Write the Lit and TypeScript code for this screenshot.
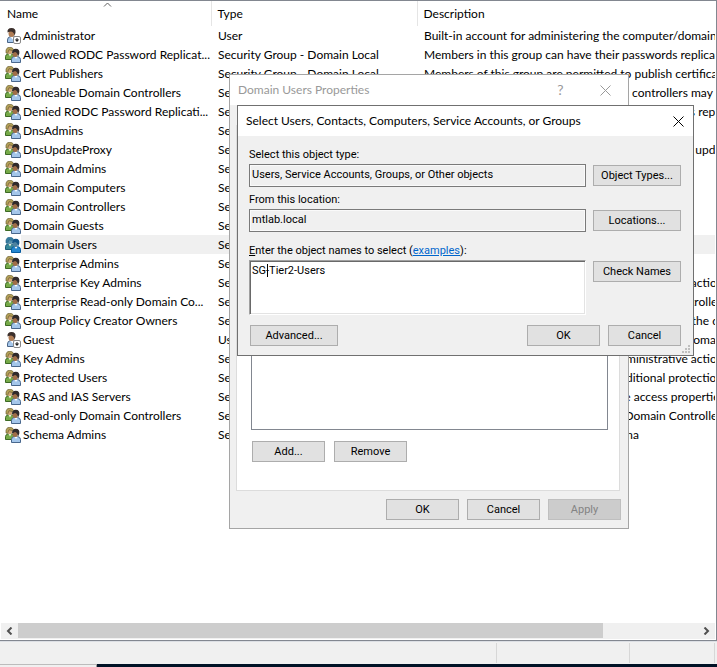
import { LitElement, html, css, svg } from "lit";
import { customElement, property } from "lit/decorators.js";

type Kind = "user" | "group";
interface Entry { name: string; kind: Kind; description: string; selected?: boolean }

const GROUP_TYPE = "Security Group - Domain Local";
const g = (name: string, description: string, selected = false): Entry => ({ name, kind: "group", description, selected });
const u = (name: string, description: string): Entry => ({ name, kind: "user", description });

const ENTRIES: Entry[] = [
  u("Administrator", "Built-in account for administering the computer/domain"),
  g("Allowed RODC Password Replicat...", "Members in this group can have their passwords replicated to all read-only domain controllers in the domain"),
  g("Cert Publishers", "Members of this group are permitted to publish certificates to the directory"),
  g("Cloneable Domain Controllers", "Members of this group that are domain controllers may be cloned."),
  g("Denied RODC Password Replicati...", "Members in this group cannot have their passwords replicated to any read-only domain controllers in the domain"),
  g("DnsAdmins", "DNS Administrators Group"),
  g("DnsUpdateProxy", "DNS clients who are permitted to perform dynamic updates on behalf of some other clients"),
  g("Domain Admins", "Designated administrators of the domain"),
  g("Domain Computers", "All workstations and servers"),
  g("Domain Controllers", "All domain controllers in the domain"),
  g("Domain Guests", "All domain guests"),
  g("Domain Users", "All domain users", true),
  g("Enterprise Admins", "Designated administrators of the enterprise"),
  g("Enterprise Key Admins", "Members of this group can perform administrative actions on key objects within the forest."),
  g("Enterprise Read-only Domain Co...", "Members of this group are Read-Only Domain Controllers in the enterprise"),
  g("Group Policy Creator Owners", "Members in this group can modify group policy for the domain"),
  u("Guest", "Built-in account for guest access to the computer/domain"),
  g("Key Admins", "Members of this group can perform administrative actions on key objects within the domain."),
  g("Protected Users", "Members of this group are afforded additional protections against authentication security threats."),
  g("RAS and IAS Servers", "Servers in this group can access remote access properties of users"),
  g("Read-only Domain Controllers", "Members of this group are Read-Only Domain Controllers in the domain"),
  g("Schema Admins", "Designated administrators of the schema"),
];

const userIcon = svg`
  <path d="M2.500 14.500V12Q2.500 9 5.500 8.500H9Q12 9 12 12V14.500Z" fill="#a6c8ec" stroke="#4a6587"/>
  <path d="M5.500 8.500L7.500 11.500L9.500 8.500Z" fill="#fff"/>
  <ellipse cx="6.500" cy="5.500" rx="3" ry="3.500" fill="#b07d55"/>
  <path d="M2.500 4.500Q2 0 6.500 0Q11 0 10.500 4.500L9.500 8Q9.300 4 6 3.500L3.500 4Z" fill="#3c302c"/>
  <rect x="8.500" y="8.500" width="7" height="7" rx="1.500" fill="#fff" stroke="#888"/>
  <path d="M11.500 10H12.500V11.500H14.300L12 14L9.700 11.500H11.500Z" fill="#222"/>`;

const groupIcon = (selected: boolean) => svg`
  <path d="M.5 12.500V9.500Q.5 7.500 3 7H7Q9.500 7.500 9.500 10V12.500Z" fill=${selected ? "#368898" : "#76aa48"} stroke=${selected ? "#1b5d7a" : "#3d6a25"}/>
  <path d="M3.500 7L5 9.500L6.500 7Z" fill="#e9f1dc"/>
  <ellipse cx="4.800" cy="4.300" rx="2.400" ry="2.800" fill=${selected ? "#5791ac" : "#d0a673"}/>
  <path d="M1 6Q.3 .3 4.800 .3Q9 .3 8.500 4.500L7.300 3.500L4 2.700L2.500 6.500Z" fill=${selected ? "#397d9d" : "#b4a058"} stroke=${selected ? "#20658d" : "#5e542a"} stroke-width=".6"/>
  <path d="M6.500 15.500V12.500Q6.500 10 9 9.500H12.500Q15.500 10 15.500 12.500V15.500Z" fill=${selected ? "#2587cf" : "#a4c6ea"} stroke=${selected ? "#075b9f" : "#48678d"}/>
  <path d="M9.500 9.500L11 12L12.500 9.500Z" fill="#fff"/>
  <ellipse cx="10.200" cy="7" rx="2.700" ry="3" fill=${selected ? "#4d829f" : "#a06e48"}/>
  <path d="M7 6.500Q6.800 1.800 10.800 1.800Q15 1.800 14.300 6.500L13 9.800Q12.800 5.500 10 5Z" fill=${selected ? "#125588" : "#302a2b"}/>`;

const fonts = css`
  * { box-sizing: border-box; }
  button, input, textarea { font: inherit; color: inherit; margin: 0; }
  .btn {
    height: 21px; padding: 0; border: 1px solid #adadad; border-radius: 0;
    background: #e1e1e1; color: #000; text-align: center; width: 73px;
    font: 11px/19px Roboto, sans-serif;
  }
  .btn.wide { width: 88px; }
  .btn:disabled { background: #ccc; border-color: #bfbfbf; color: #838383; }
  .bar {
    display: flex; align-items: center; background: #fff; height: 30px;
    padding-left: 8px; font: 12px/16px Lato, sans-serif;
  }
  .bar h2 { flex: 1; margin: 0; font: inherit; white-space: nowrap; }
  .cap { border: 0; background: none; padding: 0; width: 30px; height: 28px; display: grid; place-items: center; }
`;

const cross = html`<svg width="11" height="11" viewBox="0 0 11 11" fill="none" stroke="currentColor"><path d="M.5 .5L10.500 10.500M10.500 .5L.5 10.500"/></svg>`;

@customElement("directory-list")
class DirectoryList extends LitElement {
  @property({ attribute: false }) entries: Entry[] = [];

  static styles = css`
    * { box-sizing: border-box; }
    :host {
      display: flex; flex-direction: column; overflow: hidden; background: #fff;
      border: 1px solid #828790; border-left: 0; padding-right: 1px;
      font: 12px/19px Lato, sans-serif; color: #000;
    }
    .view { flex: 1; overflow: hidden; }
    table { width: 100%; table-layout: fixed; border-collapse: collapse; }
    .c1 { width: 211px; }
    .c2 { width: 206px; }
    th { height: 25px; padding: 0 0 0 7px; text-align: left; font-weight: 400; position: relative; }
    th + th { border-left: 1px solid #e5e5e5; padding-left: 6px; }
    .sort { position: absolute; left: 49%; top: 1px; }
    td { height: 19px; padding: 0 0 0 7px; white-space: nowrap; overflow: hidden; }
    .name { padding-left: 5px; }
    .item { display: flex; align-items: center; height: 19px; }
    .item svg { flex: none; }
    .label { flex: 1; padding-left: 2px; }
    .sel .label, .sel .plain { background: #f0f0f0; }
    .scroll { display: flex; height: 16px; margin: 0 0 1px 1px; background: #f0f0f0; color: #505050; }
    .scroll button { width: 17px; height: 16px; border: 0; padding: 0; background: none; color: inherit; display: grid; place-items: center; }
    .track { flex: 1; }
    .thumb { width: 86%; height: 15px; background: #cdcdcd; }
  `;

  render() {
    return html`
      <div class="view">
        <table>
          <colgroup><col class="c1"><col class="c2"><col></colgroup>
          <thead><tr>
            <th>Name<svg class="sort" width="9" height="5" viewBox="0 0 9 5" fill="none" stroke="#606060"><path d="M1 4.500L4.500 1L8 4.500"/></svg></th>
            <th>Type</th><th>Description</th>
          </tr></thead>
          <tbody>
            ${this.entries.map(e => html`
              <tr class=${e.selected ? "sel" : ""}>
                <td class="name"><div class="item">
                  <svg width="16" height="16" viewBox="0 0 16 16">${e.kind === "user" ? userIcon : groupIcon(!!e.selected)}</svg>
                  <span class="label">${e.name}</span>
                </div></td>
                <td class="plain">${e.kind === "user" ? "User" : GROUP_TYPE}</td>
                <td class="plain">${e.description}</td>
              </tr>`)}
          </tbody>
        </table>
      </div>
      <div class="scroll">
        <button aria-label="Scroll left"><svg width="7" height="8" viewBox="0 0 7 8" fill="none" stroke="currentColor" stroke-width="2"><path d="M5.500 .5L2 4L5.500 7.500"/></svg></button>
        <div class="track"><div class="thumb"></div></div>
        <button aria-label="Scroll right"><svg width="7" height="8" viewBox="0 0 7 8" fill="none" stroke="currentColor" stroke-width="2"><path d="M1.500 .5L5 4L1.500 7.500"/></svg></button>
      </div>`;
  }
}

@customElement("properties-dialog")
class PropertiesDialog extends LitElement {
  static styles = [fonts, css`
    :host {
      display: flex; flex-direction: column; background: #f0f0f0;
      border: 1px solid #a5a5a5; width: 400px; height: 455px; box-sizing: border-box;
    }
    .bar { color: #999; }
    .bar .cap { width: 45px; color: #999; }
    .help { font-size: 14px; }
    .tab {
      flex: 1; margin: 20px 8px 8px 6px; border: 1px solid #dcdcdc; background: #fff;
      display: flex; flex-direction: column; padding: 14px 11px 28px 14px;
    }
    .members { flex: 1; border: 1px solid #828790; }
    .row { display: flex; gap: 9px; margin: 11px 0 0 1px; }
    .foot { display: flex; justify-content: flex-end; gap: 8px; padding: 0 7px 8px 0; }
  `];
  render() {
    return html`
      <div class="bar"><h2>Domain Users Properties</h2>
        <button class="cap help" aria-label="Help">?</button>
        <button class="cap" aria-label="Close">${cross}</button></div>
      <div class="tab">
        <div class="members"></div>
        <div class="row"><button class="btn">Add...</button><button class="btn">Remove</button></div>
      </div>
      <div class="foot"><button class="btn">OK</button><button class="btn">Cancel</button><button class="btn" disabled>Apply</button></div>`;
  }
}

@customElement("select-dialog")
class SelectDialog extends LitElement {
  static styles = [fonts, css`
    :host {
      display: block; background: #f0f0f0; border: 1px solid #707070; width: 457px;
      box-sizing: border-box; font: 11px/13px Roboto, sans-serif; color: #000;
    }
    .grid {
      display: grid; grid-template-columns: 1fr 88px; column-gap: 7px;
      padding: 12px 12px 10px 11px;
    }
    label { display: block; grid-column: 1 / 3; white-space: nowrap; height: 16px; }
    .second { margin-top: 6px; }
    .third { margin-top: 12px; }
    input {
      height: 23px; width: 100%; border: 1px solid #7a7a7a; border-radius: 0;
      background: #f0f0f0; padding: 0 2px 3px; box-shadow: inset 0 0 0 1px #fafafa; outline: 0;
    }
    .grid .btn { margin-top: 1px; }
    .entry { position: relative; display: flex; height: 55px; }
    textarea {
      width: 100%; height: 55px; resize: none; border: 1px solid; border-radius: 0; outline: 0;
      border-color: #a0a0a0 #fff #fff #a0a0a0; background: #fff; padding: 3px 2px;
      box-shadow: inset 1px 1px #696969, inset -1px -1px #e3e3e3; overflow: hidden;
    }
    .caret { position: absolute; left: 18px; top: 4px; width: 1px; height: 13px; background: #000; }
    a { color: #06c; }
    .foot { display: flex; gap: 8px; padding: 0 12px 9px 12px; }
    .space { flex: 1; }
    .grip { position: absolute; right: 3px; bottom: 2px; fill: #bfbfbf; }
  `];
  render() {
    return html`
      <div class="bar"><h2>Select Users, Contacts, Computers, Service Accounts, or Groups</h2>
        <button class="cap" aria-label="Close">${cross}</button></div>
      <div class="grid">
        <label for="type">Select this object type:</label>
        <input id="type" readonly .value=${"Users, Service Accounts, Groups, or Other objects"}>
        <button class="btn wide">Object Types...</button>
        <label class="second" for="loc">From this location:</label>
        <input id="loc" readonly .value=${"mtlab.local"}>
        <button class="btn wide">Locations...</button>
        <label class="third" for="names"><u>E</u>nter the object names to select (<a href="#">examples</a>):</label>
        <div class="entry"><textarea id="names" spellcheck="false" .value=${"SG-Tier2-Users"}></textarea><span class="caret"></span></div>
        <button class="btn wide">Check Names</button>
      </div>
      <div class="foot"><button class="btn wide">Advanced...</button><span class="space"></span>
        <button class="btn">OK</button><button class="btn">Cancel</button></div>
      <svg class="grip" width="8" height="8" viewBox="0 0 8 8"><path d="M6 0h2v2h-2zM3 3h2v2h-2zM6 3h2v2h-2zM0 6h2v2h-2zM3 6h2v2h-2zM6 6h2v2h-2z"/></svg>`;
  }
}

@customElement("app-root")
class AppRoot extends LitElement {
  static styles = css`
    * { box-sizing: border-box; }
    :host { display: flex; flex-direction: column; height: 100vh; min-height: 560px; position: relative; overflow: hidden; background: #f0f0f0; }
    directory-list { flex: 1; min-height: 0; }
    .status { height: 23px; border-top: 1px solid #dcdfe4; display: flex; padding: 1px 2px 1px 0; }
    .cell { border-right: 1px solid #d7d7d7; }
    .main { flex: 1; }
    .mid { width: 133px; }
    .end { width: 85px; }
    .task { height: 3px; display: flex; background: #001226; }
    .tail { width: 97px; background: #f0f0f0; border-top: 1px solid #bcbcbc; border-right: 1px solid #999; }
    .props { position: absolute; left: 229px; top: 74px; }
    .select { position: absolute; left: 237px; top: 105px; }
  `;
  render() {
    return html`
      <directory-list .entries=${ENTRIES}></directory-list>
      <div class="status"><div class="cell main"></div><div class="cell mid"></div><div class="cell end"></div></div>
      <div class="task"><div class="tail"></div></div>
      <properties-dialog class="props" role="dialog"></properties-dialog>
      <select-dialog class="select" role="dialog"></select-dialog>`;
  }
}
